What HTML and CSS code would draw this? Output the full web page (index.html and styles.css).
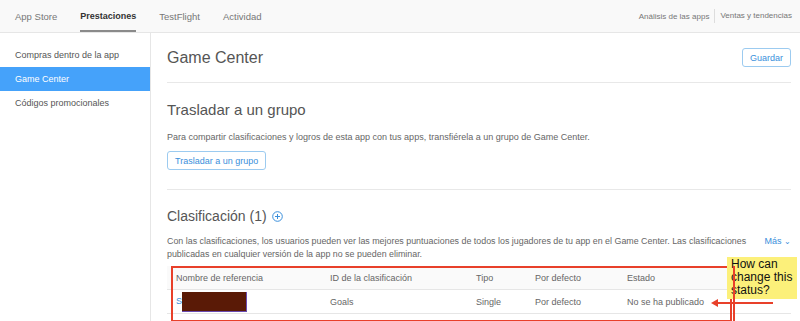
FILE: index.html
```html
<!DOCTYPE html>
<html lang="es">
<head>
    <meta charset="UTF-8">
    <title>Game Center</title>
    <link rel="stylesheet" href="styles.css">
</head>
<body>
    <header class="topnav">
        <nav class="tabs">
            <a class="tab" href="#">App Store</a>
            <a class="tab active" href="#">Prestaciones</a>
            <a class="tab" href="#">TestFlight</a>
            <a class="tab" href="#">Actividad</a>
        </nav>
        <nav class="tools">
            <a href="#">Análisis de las apps</a>
            <a class="sep" href="#">Ventas y tendencias</a>
        </nav>
    </header>

    <div class="layout">
        <aside class="sidebar">
            <a class="side-item" href="#">Compras dentro de la app</a>
            <a class="side-item active" href="#">Game Center</a>
            <a class="side-item" href="#">Códigos promocionales</a>
        </aside>

        <main class="content">
            <div class="page-head">
                <h1>Game Center</h1>
                <button class="btn">Guardar</button>
            </div>

            <section class="section">
                <h2>Trasladar a un grupo</h2>
                <p>Para compartir clasificaciones y logros de esta app con tus apps, transfiérela a un grupo de Game Center.</p>
                <button class="btn">Trasladar a un grupo</button>
            </section>

            <section class="section last">
                <h2>Clasificación (1)
                    <svg class="plus" width="11" height="11" viewBox="0 0 11 11">
                        <circle cx="5.5" cy="5.5" r="4.8" fill="none" stroke="#3a8fdb" stroke-width="1"/>
                        <path d="M5.5 3v5M3 5.5h5" stroke="#3a8fdb" stroke-width="1"/>
                    </svg>
                </h2>
                <div class="intro">
                    <p>Con las clasificaciones, los usuarios pueden ver las mejores puntuaciones de todos los jugadores de tu app en el Game Center. Las clasificaciones publicadas en cualquier versión de la app no se pueden eliminar.</p>
                    <a class="more" href="#">Más <span class="chev">&#8964;</span></a>
                </div>

                <div class="table-wrap">
                    <table class="board">
                        <thead>
                            <tr>
                                <th class="c1">Nombre de referencia</th>
                                <th class="c2">ID de la clasificación</th>
                                <th class="c3">Tipo</th>
                                <th class="c4">Por defecto</th>
                                <th>Estado</th>
                            </tr>
                        </thead>
                        <tbody>
                            <tr>
                                <td><a href="#">S</a><span class="redact"></span></td>
                                <td>Goals</td>
                                <td>Single</td>
                                <td>Por defecto</td>
                                <td>No se ha publicado</td>
                            </tr>
                        </tbody>
                    </table>

                    <!-- anotaciones dibujadas encima de la captura -->
                    <div class="mark-box"></div>
                    <div class="note">How can change this status?</div>
                    <div class="note-line"></div>
                    <div class="arrow"></div>
                </div>
            </section>
        </main>
    </div>
</body>
</html>
```

FILE: styles.css
```css
body {
    margin: 0;
    font-family: "Liberation Sans", Arial, sans-serif;
    color: #555;
    font-size: 10px;
    overflow: hidden;
}

a {
    text-decoration: none;
    color: inherit;
}

/* barra superior */
.topnav {
    display: flex;
    justify-content: space-between;
    height: 32px;
    padding: 0 8px 0 15px;
    background-color: #f9f9f9;
    border-bottom: 1px solid #e6e6e6;
}

.tabs {
    display: flex;
    gap: 23px;
}

.tab {
    display: flex;
    align-items: center;
    font-size: 9.5px;
    color: #777;
    border-bottom: 2px solid transparent;
    padding-top: 2px;
}

.tab.active {
    color: #333;
    font-weight: bold;
    font-size: 9px;
    border-bottom-color: #8a8a8a;
}

.tools {
    display: flex;
    align-items: center;
    font-size: 8px;
    color: #777;
}

.tools .sep {
    border-left: 1px solid #ddd;
    margin-left: 5px;
    padding-left: 5px;
    line-height: 14px;
}

/* columnas */
.layout {
    display: flex;
}

.sidebar {
    width: 150px;
    flex: none;
    padding-top: 10px;
    min-height: 300px;
    border-right: 1px solid #e6e6e6;
}

.side-item {
    display: block;
    height: 24px;
    line-height: 24px;
    padding-left: 15px;
    font-size: 9px;
    color: #555;
}

.side-item.active {
    background-color: #45a2fa;
    color: #fff;
}

.content {
    flex: 1;
    padding: 0 9px 0 16px;
}

.page-head {
    display: flex;
    justify-content: space-between;
    align-items: center;
    height: 49px;
    border-bottom: 1px solid #e8e8e8;
}

h1 {
    margin: 0;
    font-size: 16px;
    font-weight: normal;
    color: #555;
}

.btn {
    height: 19px;
    padding: 0 7px;
    background-color: #fff;
    border: 1px solid #9ccbf0;
    border-radius: 3px;
    color: #3a8fdb;
    font-family: inherit;
    font-size: 9px;
}

.section {
    padding: 18px 0 19px;
    border-bottom: 1px solid #e8e8e8;
}

.section h2 {
    margin: 0;
    font-size: 15px;
    line-height: 18px;
    font-weight: normal;
    color: #555;
    display: flex;
    align-items: center;
    gap: 5px;
}

.section p {
    margin: 12px 0 7px;
    font-size: 9px;
    line-height: 13px;
    color: #666;
}

.section.last {
    padding-top: 17px;
    border-bottom: none;
}

.section.last h2 {
    font-size: 14px;
}

.intro {
    display: flex;
    justify-content: space-between;
    gap: 10px;
    margin-top: 10px;
}

.intro p {
    margin: 0;
    font-size: 8.9px;
}

.more {
    color: #3a8fdb;
    font-size: 9px;
    line-height: 13px;
    white-space: nowrap;
}

.chev {
    font-size: 8px;
}

/* tabla */
.table-wrap {
    position: relative;
    margin-top: 5px;
}

.board {
    width: 100%;
    border-collapse: collapse;
    font-size: 9px;
}

.board th,
.board td {
    height: 23px;
    padding: 0 0 0 9px;
    text-align: left;
    font-weight: normal;
    color: #666;
    border-bottom: 1px solid #e6e6e6;
}

.board th {
    background-color: #fafafa;
}

.board .c1 { width: 145px; }
.board .c2 { width: 137px; }
.board .c3 { width: 50px; }
.board .c4 { width: 83px; }

.board td a {
    color: #3a8fdb;
}

.redact {
    display: inline-block;
    width: 64px;
    height: 19px;
    vertical-align: middle;
    background-color: #5a1a06;
    border-right: 1px solid #6a4ab0;
    border-bottom: 1px solid #6a4ab0;
}

.mark-box {
    position: absolute;
    left: 4px;
    top: 0;
    width: 561px;
    height: 56px;
    border: 2px solid #e8402a;
    box-sizing: border-box;
}

.note {
    position: absolute;
    left: 560px;
    top: -9px;
    width: 62px;
    padding: 1px 4px 2px;
    background-color: #fcf07a;
    color: #111;
    font-size: 12px;
    line-height: 13px;
}

.note-line {
    position: absolute;
    left: 566px;
    top: 0;
    width: 2px;
    height: 56px;
    background-color: #e8402a;
}

.arrow {
    position: absolute;
    left: 546px;
    top: 36px;
    width: 60px;
    height: 2px;
    background-color: #e8402a;
}

.arrow::before {
    content: "";
    position: absolute;
    left: -2px;
    top: -3px;
    border-right: 7px solid #e8402a;
    border-top: 4px solid transparent;
    border-bottom: 4px solid transparent;
}
```
